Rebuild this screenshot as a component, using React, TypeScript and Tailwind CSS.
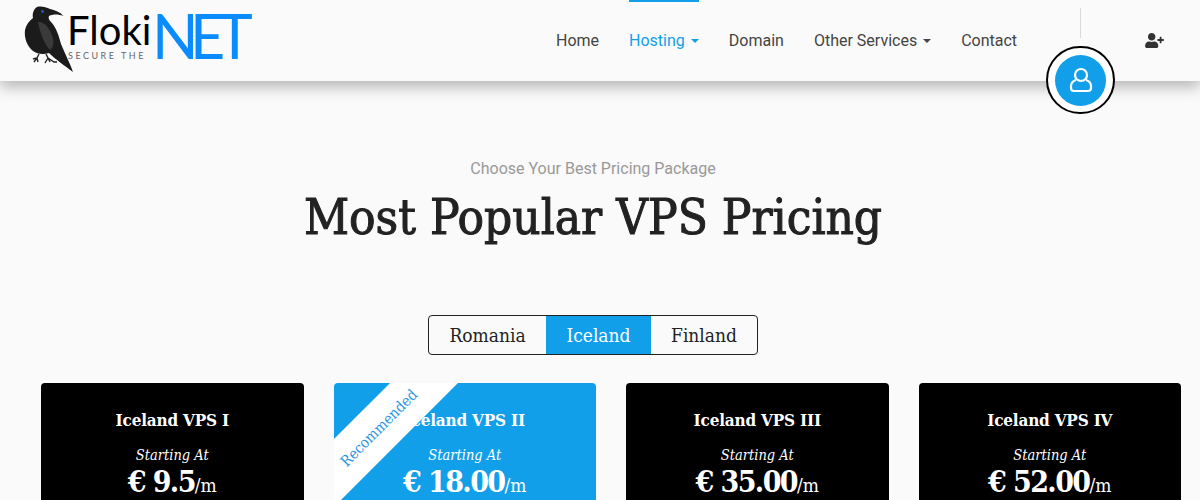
import type { CSSProperties } from 'react';

const SERIF: CSSProperties = { fontFamily: '"DejaVu Serif Condensed", "DejaVu Serif", serif', fontStretch: 'condensed' };

const plans = [
  { name: 'Iceland VPS I', price: '9.5', featured: false },
  { name: 'Iceland VPS II', price: '18.00', featured: true },
  { name: 'Iceland VPS III', price: '35.00', featured: false },
  { name: 'Iceland VPS IV', price: '52.00', featured: false },
];

function Raven() {
  return (
    <svg viewBox="20 0 60 76" className="h-[76px] w-[60px]">
      <path
        fill="#1b1b1b"
        d="M63.500 16 C60 12 55 10 50 9 C46 7 41 6 37 7 C34 9 32 13 33 18 C29 21 26 25 25 30 C24 38 27 46 33 51 C37 54 43 55 49 53 C55 59 65 66 73 72 C70 63 65 54 61 44 C59 36 56 27 51 22 C49 20 48 18 49 16 C53 14 58 14 63.500 16 Z"
      />
      <path fill="#3a3a3a" d="M38 22 C44 21 50 28 53 38 C54 43 53 48 50 50 C45 45 40 34 38 22 Z" />
      <path stroke="#222" strokeWidth="1.400" fill="none" d="M39 54 L37 58 L33 59 M37 58 L34 62 M37 58 L38 62 M46 54 L48 58 L45 63 M48 58 L50 62 M48 58 L54 62 L57 62" />
      <circle cx="42.500" cy="11.500" r="1.400" fill="#1d5fc0" />
    </svg>
  );
}

function Logo() {
  return (
    <div className="flex items-start">
      <Raven />
      <div className="relative ml-[-13px] h-[64px] w-[190px] [font-family:Lato,sans-serif]">
        <span className="absolute left-0 top-[12px] text-[40px] leading-[36px] text-black">Floki</span>
        <span className="absolute left-[1px] top-[51px] whitespace-nowrap text-[9px] leading-[10px] tracking-[2.500px] text-[#666]">SECURE THE</span>
        <span className="absolute left-[85px] top-[4px] text-[61px] leading-[64px] tracking-[-8.500px] text-[#0a8cff]">NET</span>
      </div>
    </div>
  );
}

function Caret() {
  return <span className="ml-[6px] inline-block h-0 w-0 border-x-[4px] border-t-[4px] border-x-transparent border-t-current align-middle" />;
}

function NavItem({ label, caret, active }: { label: string; caret?: boolean; active?: boolean }) {
  return (
    <a className={`flex h-[81px] items-center whitespace-nowrap border-t-2 pb-[2px] ${active ? 'border-[#129fea] text-[#129fea]' : 'border-transparent text-[#444]'}`}>
      {label}
      {caret && <Caret />}
    </a>
  );
}

function Header() {
  return (
    <header className="relative z-10 flex h-[81px] items-start bg-[#fafafa] shadow-[0_6px_14px_rgba(0,0,0,0.28)]">
      <div className="ml-[20px]">
        <Logo />
      </div>
      <nav className="ml-[299px] flex gap-[30px] text-[16px] [font-family:Roboto,sans-serif]">
        <NavItem label="Home" />
        <NavItem label="Hosting" caret active />
        <NavItem label="Domain" />
        <NavItem label="Other Services" caret />
        <NavItem label="Contact" />
      </nav>
      <div className="ml-[63px] mt-[8px] h-[30px] w-px bg-[#d8d8d8]" />
      <svg viewBox="0 0 640 512" className="ml-[64px] mt-[33px] h-[15px] w-[19px]" fill="#333">
        <path d="M624 208h-64v-64c0-8.800-7.200-16-16-16h-32c-8.800 0-16 7.200-16 16v64h-64c-8.800 0-16 7.200-16 16v32c0 8.800 7.200 16 16 16h64v64c0 8.800 7.200 16 16 16h32c8.800 0 16-7.200 16-16v-64h64c8.800 0 16-7.200 16-16v-32c0-8.800-7.200-16-16-16zm-400 48c70.700 0 128-57.300 128-128S294.700 0 224 0 96 57.300 96 128s57.300 128 128 128zm89.600 32h-16.700c-22.200 10.200-46.900 16-72.900 16s-50.600-5.800-72.900-16h-16.700C60.200 288 0 348.200 0 422.400V464c0 26.500 21.500 48 48 48h352c26.500 0 48-21.500 48-48v-41.600c0-74.200-60.200-134.400-134.400-134.400z" />
      </svg>
      <div className="absolute left-[1046px] top-[46px] flex h-[68px] w-[69px] items-center justify-center rounded-full border-2 border-black bg-white">
        <div className="flex h-[51px] w-[51px] items-center justify-center rounded-full bg-[#129fea]">
          <svg viewBox="0 0 24 26" className="h-[26px] w-[24px]" fill="none" stroke="#fff" strokeWidth="2.200">
            <circle cx="12" cy="8" r="6" />
            <path d="M7 13 C4 14 2 16 2 19 V21 C2 23 3.500 24 5 24 H19 C20.500 24 22 23 22 21 V19 C22 16 20 14 17 13" />
          </svg>
        </div>
      </div>
    </header>
  );
}

function Tabs() {
  return (
    <div className="flex justify-center" style={SERIF}>
      <div className="flex h-[40px] overflow-hidden rounded-[4px] border border-[#222] text-[19px] text-[#222]">
        <button className="w-[117px]">Romania</button>
        <button className="w-[105px] bg-[#129fea] text-white">Iceland</button>
        <button className="w-[106px]">Finland</button>
      </div>
    </div>
  );
}

function PlanCard({ name, price, featured }: { name: string; price: string; featured: boolean }) {
  return (
    <div className={`relative h-[200px] overflow-hidden rounded-[4px] pt-[25px] text-center text-white ${featured ? 'bg-[#129fea]' : 'bg-black'}`} style={SERIF}>
      <div className="text-[17px] font-bold leading-[24px] tracking-[-0.2px]">{name}</div>
      <div className="mt-[13px] text-[14.500px] italic leading-[20px]">Starting At</div>
      <div className="whitespace-nowrap leading-[34px]">
        <span className="text-[30px] font-bold tracking-[-1.600px]">€ {price}</span>
        <span className="text-[19px]">/m</span>
      </div>
      {featured && (
        <div className="absolute left-[-55px] top-[21px] flex h-[48px] w-[200px] -rotate-45 items-center justify-center bg-white text-[15px] text-[#2a93e0]">
          Recommended
        </div>
      )}
    </div>
  );
}

export default function App() {
  return (
    <div className="h-[500px] w-[1200px] overflow-hidden bg-[#fafafa]">
      <Header />
      <main>
        <div className="w-[1186px]">
          <p className="mt-[78px] text-center text-[16px] leading-[20px] text-[#999] [font-family:Roboto,sans-serif]">Choose Your Best Pricing Package</p>
          <h1 className="mt-[10px] text-center text-[49px] leading-[58px] text-[#222] [-webkit-text-stroke:1px_#222]" style={SERIF}>Most Popular VPS Pricing</h1>
          <div className="mt-[68px]">
            <Tabs />
          </div>
        </div>
        <div className="ml-[41px] mt-[28px] grid w-[1140px] grid-cols-4 gap-[30px]">
          {plans.map((p) => (
            <PlanCard key={p.name} {...p} />
          ))}
        </div>
      </main>
    </div>
  );
}
